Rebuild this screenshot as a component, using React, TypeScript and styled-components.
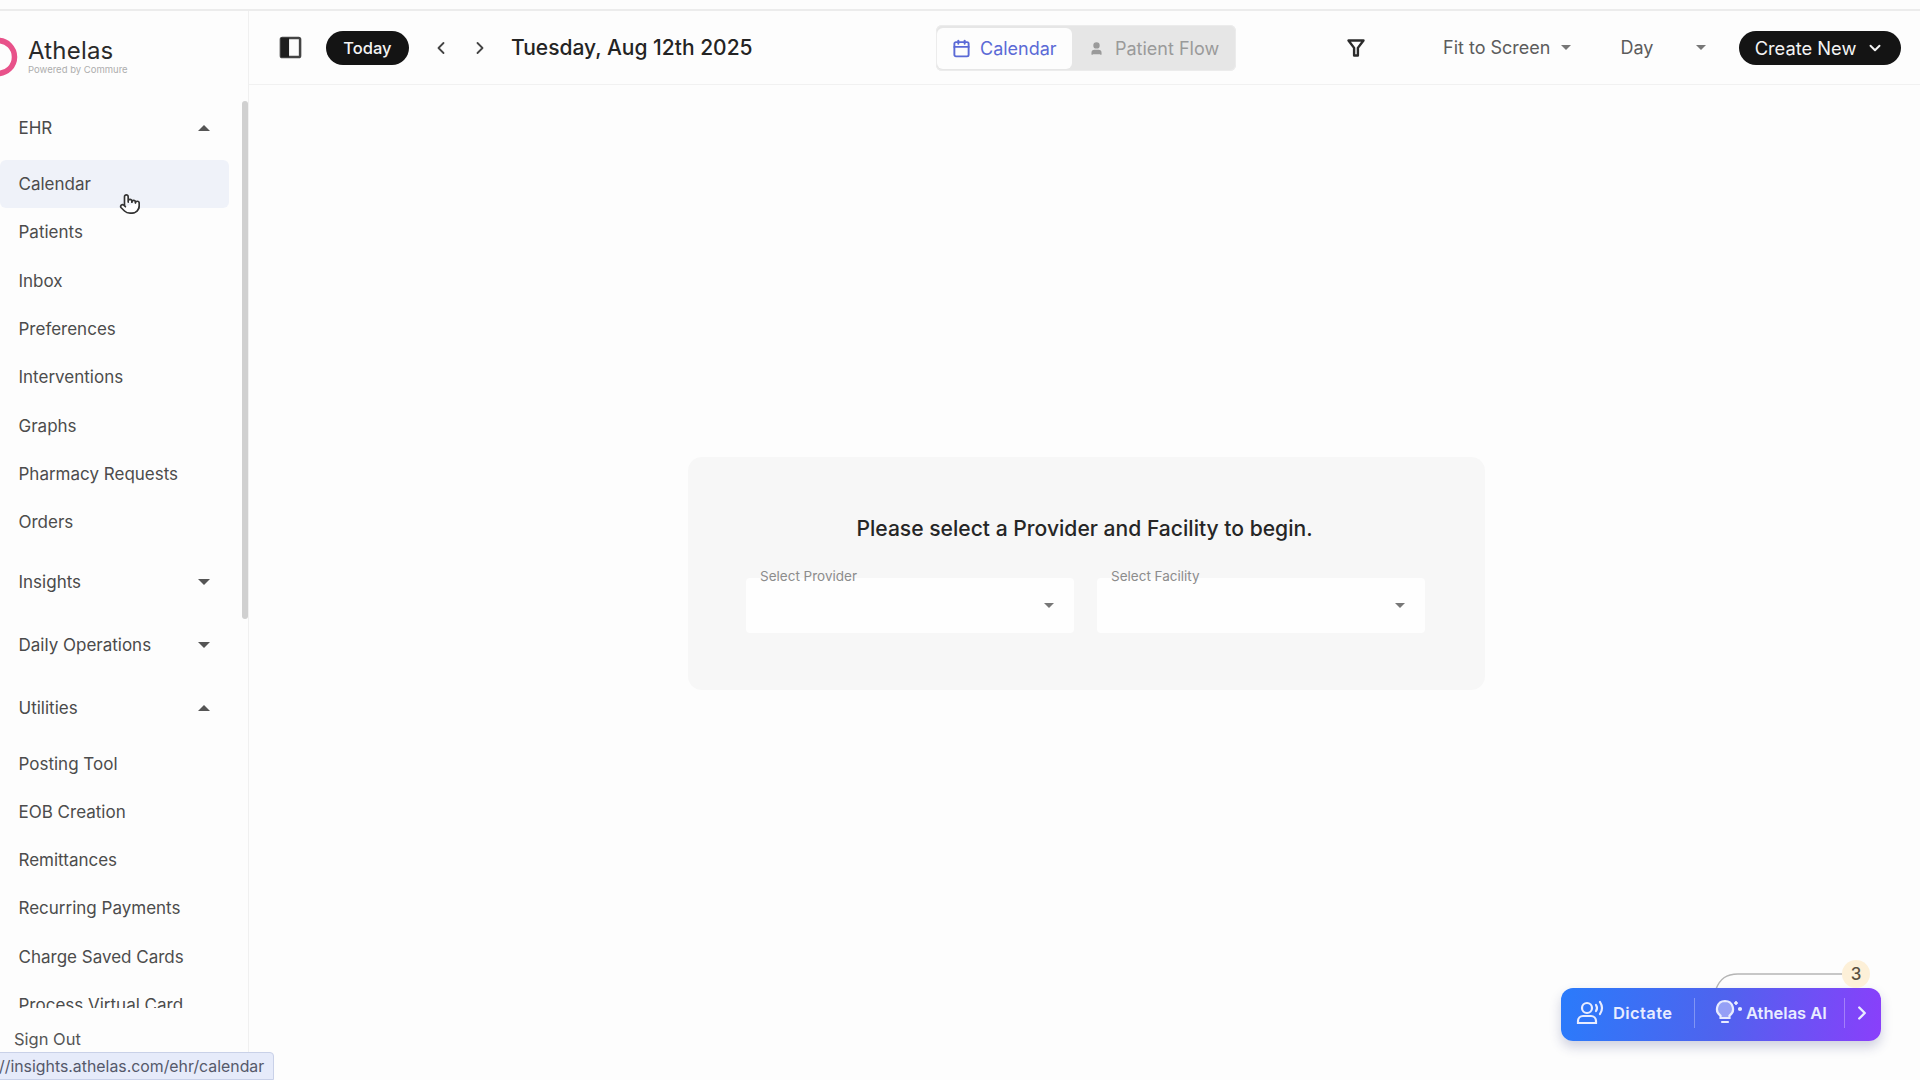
import React from "react";
import styled, { createGlobalStyle } from "styled-components";
import { Calendar, ChevronDown, ChevronLeft, ChevronRight, Pointer, User } from "lucide-react";

const Global = createGlobalStyle`
  html, body { margin: 0; padding: 0; height: 100%; background: #fdfdfd; overflow: hidden; }
  body { font-family: Inter, "Liberation Sans", sans-serif; color: #222; }
  #root { height: 100%; }
`;

const Page = styled.div`
  position: relative;
  width: 1920px;
  height: 1080px;
  display: flex;
  flex-direction: column;
  overflow: hidden;
  background: #fdfdfd;
`;
const TopStrip = styled.div`
  height: 11px;
  flex: none;
  border-bottom: 2px solid #ececec;
  box-sizing: border-box;
`;
const Body = styled.div`
  flex: 1;
  min-height: 0;
  display: flex;
`;
const Sidebar = styled.aside`
  position: relative;
  width: 249px;
  flex: none;
  box-sizing: border-box;
  border-right: 1px solid #f0f0f0;
  display: flex;
  flex-direction: column;
`;
const Brand = styled.div`
  height: 97px;
  flex: none;
  display: flex;
  align-items: flex-start;
  padding-top: 25px;
  box-sizing: border-box;
  gap: 10px;
`;
const BrandText = styled.div`
  display: flex;
  flex-direction: column;
`;
const BrandName = styled.div`
  font-size: 24px;
  line-height: 30px;
  color: #2a2a2a;
  letter-spacing: 0.2px;
`;
const BrandSub = styled.div`
  font-size: 9.5px;
  line-height: 12px;
  color: #adadad;
  margin-top: -2px;
`;
const Nav = styled.nav`
  flex: 1;
  min-height: 0;
  overflow: hidden;
`;
const Section = styled.div<{ $open?: boolean }>`
  padding-bottom: ${(p) => (p.$open ? "16px" : "23px")};
`;
const SectionHead = styled.div`
  height: 40px;
  display: flex;
  align-items: center;
  justify-content: space-between;
  padding: 0 38px 0 18.5px;
  font-size: 17px;
  color: #4a4a4a;
`;
const Caret = styled.span<{ $up?: boolean; $color?: string; $w?: number }>`
  width: 0;
  height: 0;
  flex: none;
  border-left: ${(p) => p.$w ?? 6}px solid transparent;
  border-right: ${(p) => p.$w ?? 6}px solid transparent;
  ${(p) => (p.$up ? "border-bottom" : "border-top")}: ${(p) => p.$w ?? 6}px solid ${(p) => p.$color ?? "#555"};
`;
const Items = styled.div<{ $top: number }>`
  margin-top: ${(p) => p.$top}px;
  margin-right: 19px;
`;
const Item = styled.div<{ $active?: boolean }>`
  height: 48.3px;
  display: flex;
  align-items: center;
  padding-left: 18.5px;
  font-size: 17px;
  color: #4c4c4c;
  border-radius: 6px;
  background: ${(p) => (p.$active ? "#eff2f9" : "transparent")};
`;
const SignOut = styled.div`
  height: 72px;
  flex: none;
  box-sizing: border-box;
  padding: 19px 0 0 14px;
  font-size: 16.5px;
  line-height: 24px;
  color: #555;
`;
const ScrollThumb = styled.div`
  position: absolute;
  left: 242px;
  top: 90px;
  width: 6px;
  height: 518px;
  background: #d0d0d0;
  border-radius: 3px;
`;
const Cursor = styled.div`
  position: absolute;
  left: 119px;
  top: 182px;
  color: #333;
  line-height: 0;
`;
const Main = styled.main`
  flex: 1;
  min-width: 0;
  display: flex;
  flex-direction: column;
`;
const Toolbar = styled.header`
  height: 74px;
  flex: none;
  box-sizing: border-box;
  border-bottom: 1px solid #f1f1f1;
  display: flex;
  align-items: center;
  padding: 0 20px 0 30px;
`;
const PanelIcon = styled.svg`
  width: 23px;
  height: 23px;
  margin-right: 24px;
  flex: none;
`;
const PillButton = styled.button`
  height: 34px;
  border: 0;
  border-radius: 17px;
  background: #141414;
  color: #f4f4f4;
  font-family: inherit;
  font-weight: 500;
  display: flex;
  align-items: center;
  justify-content: center;
  flex: none;
`;
const TodayButton = styled(PillButton)`
  width: 83px;
  font-size: 16.5px;
  font-weight: 500;
`;
const CreateButton = styled(PillButton)`
  width: 162px;
  font-size: 18.3px;
  font-weight: 400;
  gap: 10px;
  margin-left: 30px;
`;
const NavArrows = styled.div`
  display: flex;
  align-items: center;
  gap: 19px;
  margin-left: 22px;
  color: #444;
  line-height: 0;
`;
const DateTitle = styled.div`
  font-size: 21px;
  font-weight: 500;
  color: #242424;
  margin-left: 21px;
  white-space: nowrap;
  width: 425px;
  flex: none;
`;
const Toggle = styled.div`
  display: flex;
  width: 300px;
  height: 46px;
  flex: none;
  box-sizing: border-box;
  background: #e6e6e6;
  border-radius: 6px;
  padding: 3px 0 2px 1px;
  box-shadow: inset 0 0 0 1px #ececec;
`;
const ToggleTab = styled.div<{ $active?: boolean }>`
  height: 100%;
  display: flex;
  align-items: center;
  box-sizing: border-box;
  font-size: 18px;
  gap: ${(p) => (p.$active ? "9px" : "11px")};
  border-radius: 6px;
  white-space: nowrap;
  padding-left: ${(p) => (p.$active ? "15px" : "17px")};
  width: ${(p) => (p.$active ? "135px" : "auto")};
  background: ${(p) => (p.$active ? "#fdfdfd" : "transparent")};
  color: ${(p) => (p.$active ? "#5b6ad6" : "#9a9a9a")};
`;
const FilterSlot = styled.div`
  margin-left: 110px;
  width: 22px;
  flex: none;
  line-height: 0;
  color: #333;
`;
const DropText = styled.div<{ $w: number; $gap: number }>`
  display: flex;
  align-items: center;
  font-size: 18px;
  color: #5c5c5c;
  width: ${(p) => p.$w}px;
  gap: ${(p) => p.$gap}px;
  white-space: nowrap;
  flex: none;
`;
const FitDrop = styled(DropText)`
  margin-left: 75px;
`;
const DayDrop = styled(DropText)`
  margin-left: 43.5px;
`;
const Canvas = styled.div`
  flex: 1;
  display: flex;
  align-items: center;
  justify-content: center;
  padding: 0 0 19px 4px;
`;
const Card = styled.section`
  width: 797px;
  height: 233px;
  box-sizing: border-box;
  background: #f7f7f7;
  border-radius: 14px;
  padding: 57px 60px 0 58px;
  display: flex;
  flex-direction: column;
  align-items: center;
`;
const CardTitle = styled.h2`
  margin: 0 0 34px -2px;
  font-size: 21.1px;
  line-height: 30px;
  font-weight: 500;
  color: #262626;
  white-space: nowrap;
`;
const Selects = styled.div`
  width: 100%;
  display: flex;
  gap: 23px;
`;
const SelectBox = styled.div`
  position: relative;
  flex: 1;
  height: 55px;
  background: #fefefe;
  border-radius: 4px;
  display: flex;
  align-items: center;
  justify-content: flex-end;
  padding-right: 20px;
`;
const SelectLabel = styled.span`
  position: absolute;
  left: 14px;
  top: -10px;
  font-size: 13.5px;
  line-height: 16px;
  color: #8c8c8c;
`;
const StatusTip = styled.div`
  position: absolute;
  left: -8px;
  bottom: 0;
  height: 28px;
  width: 282px;
  box-sizing: border-box;
  padding-left: 6px;
  display: flex;
  align-items: center;
  background: #e6ebfa;
  border: 1px solid #c9d1e8;
  border-radius: 4px 4px 0 0;
  font-size: 15.85px;
  color: #55596a;
  white-space: nowrap;
`;
const Helper = styled.div`
  position: absolute;
  left: 1561px;
  top: 988px;
  width: 320px;
  height: 53px;
  box-sizing: border-box;
  padding-bottom: 3px;
  display: flex;
  align-items: center;
  border-radius: 12px;
  background: linear-gradient(100deg, #2a7bfb 0%, #4f63ee 50%, #8a3ffb 100%);
  box-shadow: 0 6px 12px rgba(40, 50, 120, 0.22);
  color: #e8ecff;
  font-size: 16.5px;
  font-weight: 600;
`;
const HelperPart = styled.div<{ $w: number; $left: number; $sep?: boolean }>`
  height: 30px;
  width: ${(p) => p.$w}px;
  box-sizing: border-box;
  flex: none;
  display: flex;
  align-items: center;
  gap: 9px;
  padding-left: ${(p) => p.$left}px;
  border-right: ${(p) => (p.$sep ? "1px solid rgba(255,255,255,.3)" : "0")};
  white-space: nowrap;
`;
const DictateLabel = styled.span`
  letter-spacing: 0.4px;
`;
const Connector = styled.svg`
  position: absolute;
  left: 1712px;
  top: 972px;
`;
const Badge = styled.div`
  position: absolute;
  left: 1842px;
  top: 960px;
  width: 28px;
  height: 28px;
  border-radius: 50%;
  background: #fdf0d8;
  color: #5a5040;
  font-size: 17px;
  font-weight: 500;
  display: flex;
  align-items: center;
  justify-content: center;
`;

const nav: { title: string; open: boolean; top: number; items: string[] }[] = [
  { title: "EHR", open: true, top: 12, items: ["Calendar", "Patients", "Inbox", "Preferences", "Interventions", "Graphs", "Pharmacy Requests", "Orders"] },
  { title: "Insights", open: false, top: 0, items: [] },
  { title: "Daily Operations", open: false, top: 0, items: [] },
  { title: "Utilities", open: true, top: 11, items: ["Posting Tool", "EOB Creation", "Remittances", "Recurring Payments", "Charge Saved Cards", "Process Virtual Card"] },
];

export default function App() {
  return (
    <Page>
      <Global />
      <TopStrip />
      <Body>
        <Sidebar>
          <Brand>
            <svg width="18" height="42" viewBox="0 0 18 42" style={{ flex: "none" }}>
              <circle cx="-2" cy="21" r="16.5" fill="none" stroke="#e8528a" strokeWidth="5.5" />
            </svg>
            <BrandText>
              <BrandName>Athelas</BrandName>
              <BrandSub>Powered by Commure</BrandSub>
            </BrandText>
          </Brand>
          <Nav>
            {nav.map((s) => (
              <Section key={s.title} $open={s.open}>
                <SectionHead>
                  {s.title}
                  <Caret $up={s.open} />
                </SectionHead>
                {s.open && (
                  <Items $top={s.top}>
                    {s.items.map((i) => (
                      <Item key={i} $active={i === "Calendar"}>{i}</Item>
                    ))}
                  </Items>
                )}
              </Section>
            ))}
          </Nav>
          <SignOut>Sign Out</SignOut>
          <ScrollThumb />
          <Cursor>
            <Pointer size={22} strokeWidth={1.8} fill="#fff" />
          </Cursor>
        </Sidebar>
        <Main>
          <Toolbar>
            <PanelIcon viewBox="0 0 24 24">
              <rect x="2" y="2" width="20" height="20" rx="1.5" fill="none" stroke="#444" strokeWidth="2.6" />
              <rect x="2" y="2" width="8.5" height="20" fill="#1e1e1e" />
            </PanelIcon>
            <TodayButton>Today</TodayButton>
            <NavArrows>
              <ChevronLeft size={20} strokeWidth={2.2} />
              <ChevronRight size={20} strokeWidth={2.2} />
            </NavArrows>
            <DateTitle>Tuesday, Aug 12th 2025</DateTitle>
            <Toggle>
              <ToggleTab $active>
                <Calendar size={19} strokeWidth={2.4} />
                Calendar
              </ToggleTab>
              <ToggleTab>
                <User size={15} strokeWidth={2.2} fill="currentColor" />
                Patient Flow
              </ToggleTab>
            </Toggle>
            <FilterSlot>
              <svg width="20" height="20" viewBox="0 0 20 20" fill="none" stroke="#2b2b2b" strokeWidth="2.4" strokeLinejoin="round">
                <path d="M2.5 2.5 h15 l-5.6 7.4 v7.6 h-3.8 v-7.6 z" />
              </svg>
            </FilterSlot>
            <FitDrop $w={134} $gap={11}>
              Fit to Screen
              <Caret $color="#777" $w={5.5} />
            </FitDrop>
            <DayDrop $w={88} $gap={43}>
              Day
              <Caret $color="#777" $w={5.5} />
            </DayDrop>
            <CreateButton>
              Create New
              <ChevronDown size={18} strokeWidth={2.6} />
            </CreateButton>
          </Toolbar>
          <Canvas>
            <Card>
              <CardTitle>Please select a Provider and Facility to begin.</CardTitle>
              <Selects>
                <SelectBox>
                  <SelectLabel>Select Provider</SelectLabel>
                  <Caret $color="#777" $w={5.5} />
                </SelectBox>
                <SelectBox>
                  <SelectLabel>Select Facility</SelectLabel>
                  <Caret $color="#777" $w={5.5} />
                </SelectBox>
              </Selects>
            </Card>
          </Canvas>
        </Main>
      </Body>
      <StatusTip>//insights.athelas.com/ehr/calendar</StatusTip>
      <Connector width="130" height="18" viewBox="0 0 130 18">
        <path d="M4 17 C8 7 14 2 26 2 L130 2" fill="none" stroke="#b5b5b5" strokeWidth="1.5" />
      </Connector>
      <Helper>
        <HelperPart $w={134} $left={15} $sep>
          <svg width="28" height="26" viewBox="0 0 28 26" fill="none" stroke="currentColor" strokeWidth="2.2" strokeLinecap="round">
            <circle cx="11" cy="8" r="5" />
            <path d="M2 23 v-2 a5 5 0 0 1 5-5 h8 a5 5 0 0 1 5 5 v2 z" />
            <path d="M20 5 q2 3 0 6" />
            <path d="M24 2 q4 6 0 12" />
          </svg>
          <DictateLabel>Dictate</DictateLabel>
        </HelperPart>
        <HelperPart $w={150} $left={19} $sep>
          <svg width="30" height="28" viewBox="0 0 30 28" fill="none" stroke="currentColor" strokeWidth="2.2" strokeLinecap="round" style={{ marginRight: -7 }}>
            <path d="M11 2 a8 8 0 0 1 4.5 14.6 V19 h-9 v-2.4 A8 8 0 0 1 11 2 z" fill="rgba(232,236,255,.45)" />
            <path d="M8 23 h6" />
            <path d="M22 3 v2 M21 4 h2" />
            <circle cx="26" cy="10" r="1" fill="currentColor" />
          </svg>
          Athelas AI
        </HelperPart>
        <HelperPart $w={36} $left={6}>
          <ChevronRight size={22} strokeWidth={2.6} />
        </HelperPart>
      </Helper>
      <Badge>3</Badge>
    </Page>
  );
}
